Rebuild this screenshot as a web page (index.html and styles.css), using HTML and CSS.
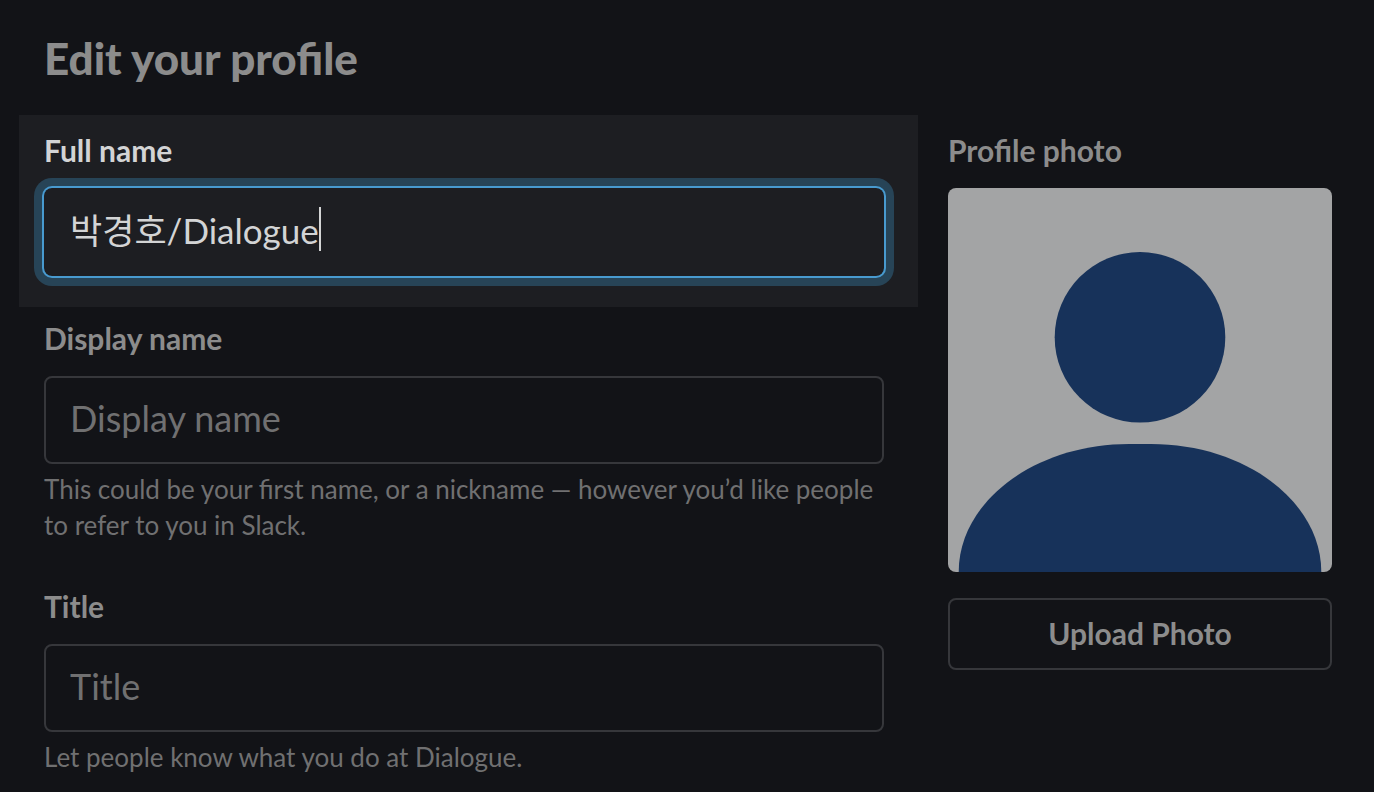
FILE: index.html
```
<!DOCTYPE html>
<html lang="en">
<head>
<meta charset="utf-8">
<title>Edit your profile</title>
<link rel="stylesheet" href="styles.css">
</head>
<body>
<main class="dialog">
  <h1 class="dialog-title">Edit your profile</h1>
  <form class="columns">
    <div class="fields">
      <div class="field field-highlight">
        <label class="label" for="full-name">Full name</label>
        <div class="input-wrap">
          <input class="input input-active" id="full-name" type="text" value="박경호/Dialogue">
          <span class="caret"></span>
        </div>
      </div>
      <div class="field">
        <label class="label" for="display-name">Display name</label>
        <input class="input" id="display-name" type="text" placeholder="Display name">
        <p class="hint">This could be your first name, or a nickname — however you’d like people to refer to you in Slack.</p>
      </div>
      <div class="field">
        <label class="label" for="title">Title</label>
        <input class="input" id="title" type="text" placeholder="Title">
        <p class="hint">Let people know what you do at Dialogue.</p>
      </div>
    </div>
    <section class="photo-column">
      <h2 class="label">Profile photo</h2>
      <svg class="photo" viewBox="0 0 384 384" role="img" aria-label="Profile photo">
        <rect width="384" height="384" fill="#a3a4a5"/>
        <circle cx="192" cy="149.300" r="85.300" fill="#17325a"/>
        <path d="M10.700 384C10.700 313.300 87 256 181 256H203C297 256 373.300 313.300 373.300 384Z" fill="#17325a"/>
      </svg>
      <button class="upload" type="button">Upload Photo</button>
    </section>
  </form>
</main>
</body>
</html>
```
FILE: styles.css
```
* {
  box-sizing: border-box;
}

body {
  margin: 0;
  background: #121317;
  color: #8c8c8c;
  font-family: Lato, "Noto Sans CJK KR", sans-serif;
}

.dialog {
  padding: 30px 42px 0 44px;
}

.dialog-title {
  margin: 0 0 29px;
  font-family: "Lato Black", Lato, sans-serif;
  font-size: 44px;
  line-height: 56px;
  font-weight: 900;
}

.columns {
  display: flex;
  align-items: flex-start;
  gap: 64px;
}

.fields {
  flex: 1;
  min-width: 0;
}

.field {
  margin-bottom: 43px;
}

.field:last-child {
  margin-bottom: 15px;
}

.field-highlight {
  margin: 0 -34px 11px -25px;
  padding: 15px 34px 31px 25px;
  background: #1d1e22;
  color: #d3d4d5;
}

.label {
  display: block;
  margin: 0 0 18px;
  font-size: 30px;
  line-height: 40px;
  font-weight: 700;
}

.input-wrap {
  position: relative;
}

.input {
  display: block;
  width: 100%;
  padding: 18px 24px 22px;
  border: 2px solid #36373b;
  border-radius: 8px;
  outline: none;
  background: transparent;
  color: inherit;
  font: inherit;
  font-size: 36px;
  line-height: 44px;
}

.input::placeholder {
  color: #707071;
  opacity: 1;
}

.input-active {
  height: 88px;
  padding: 16px 24px 24px;
  border-color: transparent;
  box-shadow: 0 0 0 2px #489acf, 0 0 0 10px #274457;
  font-size: 35px;
}

.caret {
  position: absolute;
  top: 19px;
  left: 275px;
  width: 2px;
  height: 44px;
  background: #d3d4d5;
}

.hint {
  margin: 7px 0 0;
  color: #707071;
  font-size: 26px;
  line-height: 36px;
}

.photo-column {
  flex: 0 0 384px;
  padding-top: 15px;
}

.photo {
  display: block;
  width: 100%;
  margin-bottom: 26px;
  border-radius: 8px;
}

.upload {
  display: block;
  width: 100%;
  padding: 13px 24px 15px;
  border: 2px solid #36373b;
  border-radius: 8px;
  background: transparent;
  color: inherit;
  font: inherit;
  font-size: 30px;
  line-height: 40px;
  font-weight: 700;
}
```
